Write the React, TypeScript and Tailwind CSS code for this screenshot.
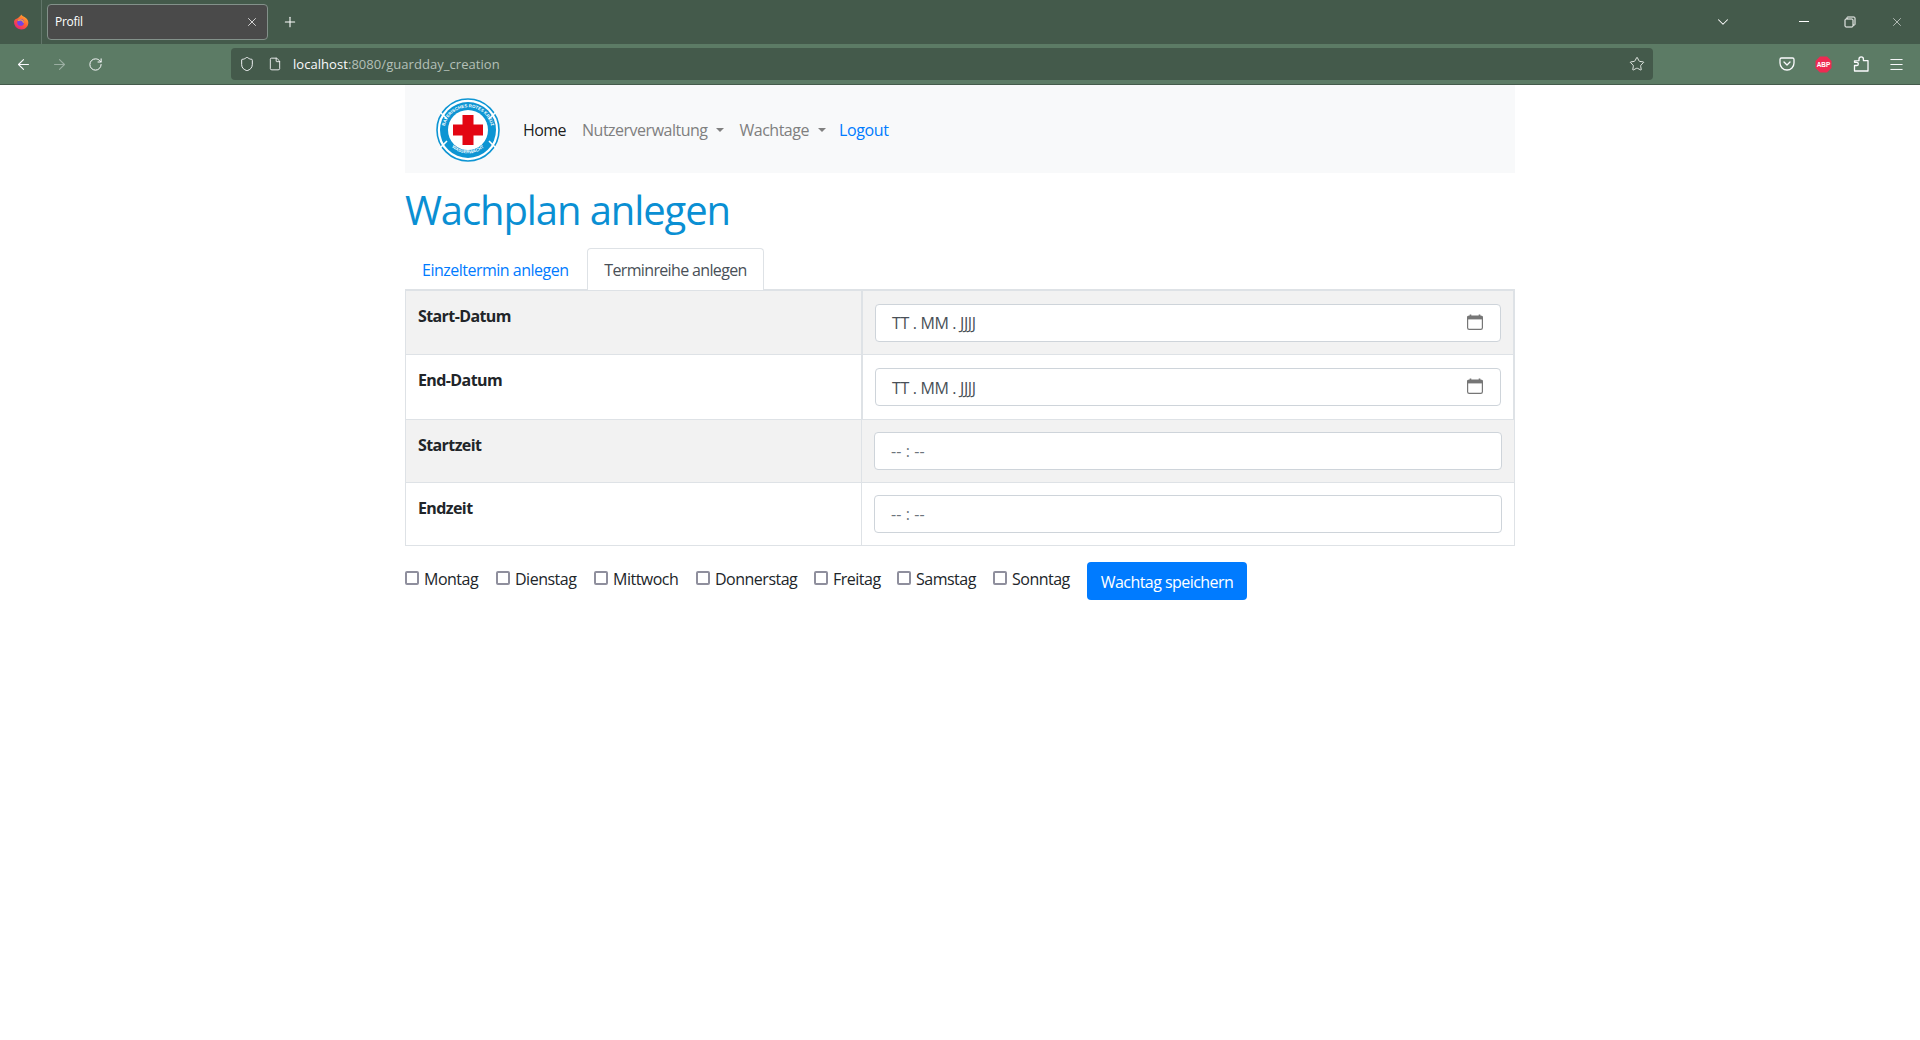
import { ArrowLeft, ArrowRight, RotateCw, Shield, File, Star, Plus, X, ChevronDown, Menu } from "lucide-react";

const days = [
  { name: "Montag", gap: "mr-[16px]", w: "w-[56px]" },
  { name: "Dienstag", gap: "mr-[17px]", w: "w-[62px]" },
  { name: "Mittwoch", gap: "mr-[18px]", w: "w-[65px]" },
  { name: "Donnerstag", gap: "mr-[17px]", w: "w-[82px]" },
  { name: "Freitag", gap: "mr-[17px]", w: "w-[47px]" },
  { name: "Samstag", gap: "mr-[17px]", w: "w-[60px]" },
  { name: "Sonntag", gap: "mr-[17px]", w: "w-[58px]" },
];

const Caret = () => (
  <span className="ml-[9px] mt-[2px] inline-block w-0 h-0 border-x-[4.8px] border-x-transparent border-t-[4.8px] border-t-[#808080]" />
);

const CalendarIcon = () => (
  <svg width="16" height="16" viewBox="0 0 16 16" className="shrink-0 -mt-[2px]">
    <path d="M3.5 0.5v2M12.5 0.5v2" stroke="#767676" strokeWidth="1.6" />
    <rect x="0.6" y="2" width="14.8" height="13.4" rx="1.6" fill="none" stroke="#767676" strokeWidth="1.2" />
    <rect x="0.6" y="2" width="14.8" height="3.4" fill="#767676" />
  </svg>
);

const Logo = () => (
  <svg width="64" height="64" viewBox="0 0 64 64" className="mt-[1px]">
    <defs>
      <path id="topArc" d="M8.6 36A23.6 23.6 0 1 1 55.4 36" />
      <path id="bottomArc" d="M12 45A24.5 24.5 0 0 0 52 45" />
    </defs>
    <circle cx="32" cy="32" r="31" fill="#fff" stroke="#0d95d3" strokeWidth="1.6" />
    <circle cx="32" cy="32" r="28" fill="#0d95d3" />
    <circle cx="32" cy="32" r="20" fill="#fff" />
    <path d="M3 13L11 21M61 13L53 21M3 51L11 43M61 51L53 43" stroke="#fff" strokeWidth="1.6" />
    <rect x="26.5" y="17" width="11" height="30" fill="#e30613" />
    <rect x="17" y="26.5" width="30" height="11" fill="#e30613" />
    <text fontSize="4.4" fontWeight="700" fill="#fff" fontFamily="Liberation Sans, sans-serif">
      <textPath href="#topArc" startOffset="50%" textAnchor="middle">BAYERISCHES ROTES KREUZ</textPath>
    </text>
    <text fontSize="4.4" fontWeight="700" fill="#fff" fontFamily="Liberation Sans, sans-serif">
      <textPath href="#bottomArc" startOffset="50%" textAnchor="middle">WASSERWACHT</textPath>
    </text>
  </svg>
);

const FirefoxLogo = () => (
  <svg width="16" height="16" viewBox="0 0 16 16">
    <defs>
      <linearGradient id="ffg" x1="0.8" y1="0" x2="0.1" y2="1">
        <stop offset="0" stopColor="#ffb22e" />
        <stop offset="0.5" stopColor="#ff5a36" />
        <stop offset="1" stopColor="#e31587" />
      </linearGradient>
    </defs>
    <path d="M8 15.5A7.3 7.3 0 0 1 1 7.5C2 4.5 4 4.8 5 4C6.5 3 7.5 1.8 8.5 0.5C9 2.5 11 2 13.5 4.5C16 7 15.5 10 14.5 12A7.5 7.5 0 0 1 8 15.5Z" fill="url(#ffg)" />
    <circle cx="7.6" cy="8.4" r="3.4" fill="#7542e5" />
    <path d="M5 6.5C7 5 10 6 10.6 8.6" stroke="#ffb22e" strokeWidth="1.2" fill="none" />
  </svg>
);

const Pocket = () => (
  <svg width="16" height="16" viewBox="0 0 16 16" fill="none" stroke="#fbfbfe" strokeWidth="1.3">
    <path d="M2.5 2h11A1.5 1.5 0 0 1 15 3.5V7a7 7 0 0 1-14 0V3.5A1.5 1.5 0 0 1 2.5 2Z" />
    <path d="M5 6l3 3 3-3" strokeLinecap="round" strokeLinejoin="round" />
  </svg>
);

const Abp = () => (
  <svg width="17" height="17" viewBox="0 0 17 17">
    <path d="M5 0.5h7L16.5 5v7L12 16.5H5L0.5 12V5Z" fill="#ee2a52" />
    <text x="8.5" y="10.8" textAnchor="middle" fontSize="6.4" fontWeight="700" fill="#fff" fontFamily="Liberation Sans, sans-serif">ABP</text>
  </svg>
);

const PuzzlePiece = () => (
  <svg width="16" height="16" viewBox="0 0 16 16" fill="none" stroke="#fbfbfe" strokeWidth="1.3" strokeLinejoin="round">
    <path d="M1 15V9.5h2.2a1.6 1.6 0 0 0 0-3.2H1V4.8L5.5 4.6V3a2.2 2.2 0 0 1 4.4 0V4.6h4.6V15Z" transform="translate(0.5 0)" />
  </svg>
);

function Row({ label, shaded, thick, time, h }: { label: string; shaded?: boolean; thick?: boolean; time?: boolean; h: string }) {
  return (
    <div className={`grid grid-cols-[455px_1fr] border-b border-[#dee2e6] ${shaded ? "bg-[#f2f2f2]" : "bg-white"} ${h}`}>
      <div className="pl-[12px] pt-[13px] font-bold text-[#212529] leading-[24px] tracking-[-0.6px]">{label}</div>
      <div className={`flex items-center border-[#dee2e6] ${thick ? "border-l-2 border-r px-[12px]" : "border-l px-[12px]"}`}>
        <div className="flex-1 h-[38px] rounded-[4px] border border-[#ced4da] bg-white flex items-center justify-between pl-[16px] pr-[17px] text-[#495057]">
          <span className={time ? "text-[#6d757c] tracking-[0.1px]" : "tracking-[-0.35px] mt-[1px]"}>{time ? "-- : --" : "TT . MM . JJJJ"}</span>
          {!time && <CalendarIcon />}
        </div>
      </div>
    </div>
  );
}

export default function App() {
  return (
    <div className="min-h-[1040px] bg-white font-['Open_Sans',sans-serif] text-[16px] text-[#212529]">
      {/* browser chrome */}
      <div className="h-[44px] bg-[#445a4b] flex items-center text-white">
        <div className="w-[42px] h-full flex items-center justify-center border-r border-[#62766a]">
          <FirefoxLogo />
        </div>
        <div className="ml-[5px] w-[221px] h-[36px] rounded-[4px] bg-[#4a4a4a] border border-[#83918a] flex items-center justify-between pl-[7px] pr-[8px] text-[12px] tracking-[-0.3px]">
          <span>Profil</span>
          <X size={14} strokeWidth={1.3} />
        </div>
        <Plus size={16} strokeWidth={1.6} className="ml-[14px]" />
        <div className="flex-1" />
        <ChevronDown size={18} strokeWidth={1.4} className="mr-[67px]" />
        <div className="w-[10px] h-px bg-white mr-[35px] -mt-[1px]" />
        <svg width="12" height="12" viewBox="0 0 12 12" fill="none" stroke="#fff" strokeWidth="1" className="mr-[34px]">
          <rect x="1" y="3" width="8" height="8" rx="1" />
          <path d="M3 3V1.5A.5.5 0 0 1 3.5 1H10a1 1 0 0 1 1 1v6.5a.5.5 0 0 1-.5.5H9" />
        </svg>
        <X size={14} strokeWidth={1} className="mr-[16px]" />
      </div>
      <div className="h-[41px] bg-[#5c7b65] border-b border-[#445a4b] flex items-center text-[#fbfbfe]">
        <ArrowLeft size={17} strokeWidth={1.5} className="ml-[15px]" />
        <ArrowRight size={17} strokeWidth={1.5} className="ml-[19px] opacity-40" />
        <RotateCw size={15} strokeWidth={1.6} className="ml-[20px]" />
        <div className="ml-[128px] w-[1422px] h-[32px] rounded-[4px] bg-[#445a4b] flex items-center pl-[8px] pr-[9px]">
          <Shield size={16} strokeWidth={1.4} />
          <File size={14} strokeWidth={1.5} className="ml-[13px]" />
          <span className="ml-[11px] mt-[2px] text-[13px] tracking-[0.05px]">
            localhost<span className="text-[#b4c0b8]">:8080/guardday_creation</span>
          </span>
          <div className="flex-1" />
          <Star size={16} strokeWidth={1.4} className="text-[#e9eee9] mr-[-1px]" />
        </div>
        <div className="flex-1" />
        <div className="mr-[20px]"><Pocket /></div>
        <div className="mr-[21px]"><Abp /></div>
        <div className="mr-[19px]"><PuzzlePiece /></div>
        <Menu size={17} strokeWidth={1.4} className="mr-[15px]" />
      </div>

      {/* page */}
      <div className="w-[1110px] ml-[405px]">
        <nav className="h-[88px] bg-[#f8f9fa] flex items-center pl-[31px]">
          <Logo />
          <span className="ml-[23px] mt-[2px] text-black/90 tracking-[-0.55px]">Home</span>
          <span className="ml-[16px] mt-[2px] text-[#7f7f7f] tracking-[-0.5px]">Nutzerverwaltung</span>
          <Caret />
          <span className="ml-[15px] mt-[2px] text-[#7f7f7f] tracking-[-0.5px]">Wachtage</span>
          <Caret />
          <span className="ml-[13px] mt-[2px] text-[#007bff] tracking-[-0.35px]">Logout</span>
        </nav>
        <h1 className="mt-[13px] h-[48px] text-[40px] leading-[48px] text-[#0a8fd3] font-normal tracking-[-1.1px]">Wachplan anlegen</h1>
        <div className="mt-[14px] h-[41px] flex items-end">
          <span className="w-[182px] h-[41px] pt-[2px] flex items-center pl-[17px] text-[#007bff] tracking-[-0.5px]">Einzeltermin anlegen</span>
          <span className="w-[177px] h-[42px] flex items-center justify-center border border-b-0 border-[#dee2e6] rounded-t-[4px] bg-white text-[#495057] tracking-[-0.65px] relative z-10 -mb-[1px]">Terminreihe anlegen</span>
        </div>
        <div className="border-x border-t-2 border-[#dee2e6]">
          <Row label="Start-Datum" shaded thick h="h-[64px]" />
          <Row label="End-Datum" thick h="h-[65px]" />
          <Row label="Startzeit" shaded time h="h-[63px]" />
          <Row label="Endzeit" time h="h-[63px]" />
        </div>
        <div className="mt-[16px] h-[38px] flex items-center">
          {days.map((d) => (
            <label key={d.name} className={`flex items-center ${d.gap}`}>
              <input type="checkbox" className="appearance-none w-[14px] h-[14px] border-2 border-[#8f8f9d] rounded-[2px] mr-[5px] -mt-[7px]" />
              <span className={`whitespace-nowrap tracking-[-0.5px] -mt-[5px] ${d.w}`}>{d.name}</span>
            </label>
          ))}
          <button className="h-[38px] w-[160px] pt-[2px] rounded-[4px] bg-[#007bff] text-white tracking-[-0.55px]">Wachtag speichern</button>
        </div>
      </div>
    </div>
  );
}
